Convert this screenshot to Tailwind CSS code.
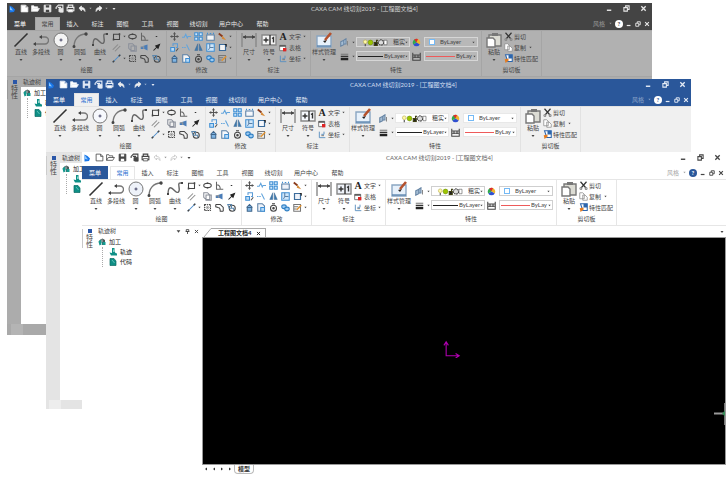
<!DOCTYPE html>
<html lang="zh-CN">
<head>
    <meta charset="UTF-8">
    <meta name="viewport" content="width=device-width, initial-scale=1.0">
    <title>CAXA CAM 线切割2019</title>
    <script src="https://cdn.jsdelivr.net/npm/@tailwindcss/browser@4"></script>
</head>
<body class="bg-white fill-none stroke-current [stroke-width:1.4] font-['Lato','Noto_Sans_CJK_SC',sans-serif] text-[6px] leading-[8px] text-[#444]">

    <!-- Icon sprite -->
    <svg class="hidden">
        <symbol id="caret" viewBox="0 0 8 8"><path d="M1 2h6L4 6z" fill="currentColor" stroke="none"/></symbol>
        <symbol id="logo" viewBox="0 0 16 16"><path d="M3 1l6 3 5 5-2 5-9 1z" fill="#1976e8" stroke="none"/><path d="M4 3l6 8-6-1z" fill="#8cc8ff" stroke="none"/></symbol>
        <symbol id="new" viewBox="0 0 16 16"><path d="M2 2h8l4 4v8H2zM10 2v4h4" fill="var(--fill)"/></symbol>
        <symbol id="open" viewBox="0 0 16 16"><path d="M1 13V3h4l1 2h6v3M1 13l3-5h11l-3 5z" fill="var(--fill)"/></symbol>
        <symbol id="save" viewBox="0 0 16 16"><path d="M2 2h12v12H2z" fill="currentColor"/><path d="M5 2h6v4H5zM5 10h6v4H5z" fill="var(--bar)" stroke="none"/></symbol>
        <symbol id="saveas" viewBox="0 0 16 16"><path d="M2 9V6l4-4h8v12H9M5 6h6" stroke-width="2"/><path d="M7 8h7v6H7z" fill="currentColor"/></symbol>
        <symbol id="print" viewBox="0 0 16 16"><path d="M4 6V2h8v4M4 12H2V6h12v6h-2" stroke-width="2"/><path d="M4 10h8v4H4z" fill="var(--fill)"/></symbol>
        <symbol id="undo" viewBox="0 0 16 16"><path d="M2 6l5-4v3c5 0 7 2 7 8-2-3-3-4-7-4v3z" fill="var(--arrow)" stroke="var(--arrowline)"/></symbol>
        <symbol id="redo" viewBox="0 0 16 16"><path d="M14 6L9 2v3c-5 0-7 2-7 8 2-3 3-4 7-4v3z" fill="var(--arrow)" stroke="var(--arrowline)"/></symbol>
        <symbol id="min" viewBox="0 0 8 8"><path d="M1 6h5" stroke-width="1.6"/></symbol>
        <symbol id="restore" viewBox="0 0 8 8"><path d="M3 3V1h4v4H5M1 3h4v4H1z" stroke-width="1.2"/></symbol>
        <symbol id="close" viewBox="0 0 8 8"><path d="M1.500 1.500l5 5m0-5l-5 5" stroke-width="1.500"/></symbol>

        <symbol id="line" viewBox="0 0 16 16"><path d="M1.500 14.500l13-13" stroke="#333" stroke-width="1.600"/></symbol>
        <symbol id="polyline" viewBox="0 0 16 16"><path d="M1 12h11a3.500 3.500 0 000-7H7" stroke="#777"/><path d="M0 12l3-2v4zM9 3v4L6 5z" fill="#444" stroke="none"/></symbol>
        <symbol id="circle" viewBox="0 0 16 16"><circle cx="8" cy="8" r="7" stroke="#777" stroke-width="1" fill="var(--disc)"/><path d="M8 6.500v3M6.500 8h3" stroke="#446" stroke-width="1"/></symbol>
        <symbol id="arc" viewBox="0 0 16 16"><path d="M2 15C2 8 6 2 14 2" stroke="#777"/><circle cx="14" cy="2" r="1" fill="#444"/><circle cx="2" cy="14.500" r=".8" fill="#444"/></symbol>
        <symbol id="spline" viewBox="0 0 16 16"><path d="M1 14C1 3 5 7 8 10s5 1 4-4 1-4 3-4" stroke="#666"/><path d="M0 13h2M14 2h2" stroke-width="2" stroke="#444"/></symbol>

        <symbol id="rect" viewBox="0 0 12 12"><path d="M2 10V3h8v7z"/><path d="M1 10h2M9 3h2" stroke-width="2.400"/></symbol>
        <symbol id="parallel" viewBox="0 0 12 12"><path d="M1 9l7-7M4 11l7-7" stroke="#888"/></symbol>
        <symbol id="centerline" viewBox="0 0 12 12"><path d="M1 11L11 1" stroke="#4a8ccb"/><path d="M1 11l2-2M9 3l2-2" stroke-width="2"/></symbol>
        <symbol id="ellipse" viewBox="0 0 12 12"><ellipse cx="6" cy="6" rx="5" ry="3"/><path d="M5 3h2M5 9h2" stroke-width="2"/></symbol>
        <symbol id="pages" viewBox="0 0 12 12"><path d="M1 1h5l3 3v6H4L1 7zM4 4h7v7H4z" stroke="#8a8f9a"/></symbol>
        <symbol id="hatch" viewBox="0 0 12 12"><path d="M2 2h8v8H2z" stroke-dasharray="2 1"/><path d="M2 2l8 8M2 10l8-8M2 6h8M6 2v8" stroke="#888" stroke-width=".7"/></symbol>
        <symbol id="axes" viewBox="0 0 12 12"><path d="M2 1v10h9M2 5c4 0 5 3 5 6" stroke="#666"/></symbol>
        <symbol id="screen" viewBox="0 0 12 12"><path d="M1 5l9-3v8L6 8H1z" fill="#4a7db8" stroke="none"/><path d="M1 5h4v3" stroke="#999"/></symbol>
        <symbol id="block" viewBox="0 0 12 12"><path d="M1 2h6l4 4v5M1 2v3l3 1c2 0 3 2 3 5h4"/></symbol>
        <symbol id="dot" viewBox="0 0 12 12"><path d="M5 6h2" stroke="#333"/></symbol>
        <symbol id="arrow" viewBox="0 0 12 12"><path d="M2 10l5-5" stroke="#222"/><path d="M10 2L5 4l3 3z" fill="#222" stroke="#222"/></symbol>
        <symbol id="gear" viewBox="0 0 12 12"><circle cx="7" cy="7" r="4"/><path d="M1 2h5v5H3zM5 7h4v3" stroke="#5a86ad"/></symbol>

        <symbol id="move" viewBox="0 0 12 12"><path d="M6 1v10M1 6h10" stroke="#555"/><path d="M4 3l2-3 2 3zM4 9l2 3 2-3zM3 4L0 6l3 2zM9 4l3 2-3 2z" fill="#555" stroke="none"/></symbol>
        <symbol id="trim" viewBox="0 0 12 12"><path d="M0 7h3l2-4 2 5 1-2h4" stroke="#62a4dc"/></symbol>
        <symbol id="array" viewBox="0 0 12 12"><path d="M1 1h4v4H1zM7 1h4v4H7zM1 7h4v4H1zM7 7h4v4H7z" stroke="#3f8fd4" fill="#cfe6fa"/></symbol>
        <symbol id="stretch" viewBox="0 0 12 12"><path d="M1 4h10v7H1z" stroke="#5a7fa5" fill="var(--disc)"/><path d="M2 1v2M5 2h2M10 1v2" stroke="#3f8fd4"/></symbol>
        <symbol id="erase" viewBox="0 0 12 12"><path d="M1 2l5 4" stroke="#8a3b1c" stroke-width="2.500"/><path d="M6 5l5 6-6-2z" fill="#d68a38" stroke="none"/></symbol>
        <symbol id="copy" viewBox="0 0 12 12"><path d="M1 6h5v5H1z" fill="#bcdcf7" stroke="#3f8fd4"/><path d="M4 4V1h6v5H8" stroke="#5a9bd6"/><path d="M8 11l3-4" stroke="#555"/></symbol>
        <symbol id="extend" viewBox="0 0 12 12"><path d="M0 6h6" stroke="#62a4dc" stroke-dasharray="2 1"/><path d="M6 2l4 8" stroke="#62a4dc"/></symbol>
        <symbol id="mirror" viewBox="0 0 12 12"><path d="M5 1v9H1zM7 1v9h4z" fill="#3c78ad" stroke="#3c6890" stroke-width=".6"/></symbol>
        <symbol id="scale" viewBox="0 0 12 12"><path d="M1 1h10v10H1z" fill="#cfe6fa" stroke="#3f8fd4"/><path d="M5 1v5h5M3 9l2-2" stroke="#5a7fa5"/></symbol>
        <symbol id="frame" viewBox="0 0 12 12"><path d="M2 2h8v8H2z" stroke="#3b6c9c" stroke-width="1.600" fill="var(--disc)"/><path d="M9 2h2v3" stroke="#222"/></symbol>
        <symbol id="lift" viewBox="0 0 12 12"><path d="M2 6l4-4 4 4M3 6v5h6V6z" fill="#7fb5e4" stroke="#41678c"/></symbol>
        <symbol id="find" viewBox="0 0 12 12"><path d="M1 1h6l3 3v7H1z" stroke="#5a7fa5" fill="var(--disc)"/><path d="M5 6h5v5H5z" stroke="#3f8fd4" fill="#bcdcf7"/></symbol>
        <symbol id="rotate" viewBox="0 0 12 12"><circle cx="6" cy="7" r="4"/><circle cx="6" cy="7" r="1" fill="currentColor"/><path d="M4 1h4"/></symbol>
        <symbol id="chain" viewBox="0 0 12 12"><ellipse cx="4" cy="5" rx="3" ry="2.500" stroke="#2f7fc4" fill="#9bcbf3"/><ellipse cx="8" cy="8" rx="3" ry="2.500" stroke="#2f7fc4" fill="#9bcbf3"/></symbol>
        <symbol id="edit" viewBox="0 0 12 12"><path d="M1 2h9v9H1zM1 5h6M1 8h4" stroke="#777"/><path d="M5 9l6-6" stroke="#e0912e" stroke-width="2"/></symbol>

        <symbol id="dim" viewBox="0 0 16 16"><path d="M1 1v14M15 1v14" stroke="#888"/><path d="M2 5h12" stroke="#444"/><path d="M2 5l3-2v4zM14 5l-3-2v4z" fill="#444" stroke="none"/></symbol>
        <symbol id="sign" viewBox="0 0 16 16"><path d="M1 3h14v10H1z" fill="var(--disc)" stroke="#888"/><path d="M2.500 8h5M5 5.500v5M9 3v10M11 6.500l1.500-1v5" stroke="#333"/></symbol>
        <symbol id="table" viewBox="0 0 12 12"><path d="M1 2h9v8H1z" fill="#fff" stroke="#777"/><path d="M1 3h9" stroke="#444" stroke-width="2"/><path d="M6 6h5v5H6z" fill="#e02424" stroke="none"/></symbol>
        <symbol id="coord" viewBox="0 0 12 12"><path d="M2 1v9h9M5 5h4V1" stroke="#5a8fc0"/><path d="M5 7h4" stroke="#777"/></symbol>
        <symbol id="style" viewBox="0 0 16 16"><path d="M1 4h14v11H1z" fill="#e7f1fb" stroke="#8aa6c2"/><path d="M1 14h14" stroke="#5e87b0"/><path d="M7 9l2 2 2-3z" fill="#222" stroke="none"/><path d="M9 8l6-7" stroke="#b4512d" stroke-width="2.600"/></symbol>
        <symbol id="layers" viewBox="0 0 12 12"><path d="M1 5l4-2v6l-4 2zM5 3l3-2v7H5z" fill="#a5bdd4" stroke="#6886a5"/><path d="M10 4v6" stroke="#888"/></symbol>
        <symbol id="weights" viewBox="0 0 12 12"><path d="M1 3h10" stroke="#777"/><path d="M1 6h10" stroke="#333" stroke-width="2"/><path d="M1 9.500h10" stroke="#222" stroke-width="3"/></symbol>
        <symbol id="states" viewBox="0 0 34 12"><circle cx="4" cy="5" r="2.500" fill="#fff9a8" stroke="#b8ab4a" stroke-width=".8"/><path d="M4 8v3"/><circle cx="11" cy="6" r="3.200" fill="#9cc400" stroke="#6d8f00" stroke-width=".8"/><path d="M16 6h4v4h-4zM19 6V3h2" fill="#222" stroke="#3d3d10"/><circle cx="25" cy="6" r="3.500" stroke="#333" stroke-dasharray="2 1" fill="#ddd"/><path d="M29 3h4v6h-4z" fill="#fff" stroke="#555" stroke-width=".8"/></symbol>
        <symbol id="wheel" viewBox="0 0 12 12"><g stroke="none"><path d="M6 6V1a5 5 0 014.300 7.500z" fill="#f0b429"/><path d="M6 6l4.300 2.500a5 5 0 01-8.600 0z" fill="#2f4fd0"/><path d="M6 6L1.700 8.500A5 5 0 016 1z" fill="#2fa84f"/><path d="M6 6L3 2a5 5 0 015-.6z" fill="#e02c2c"/></g></symbol>
        <symbol id="ltype" viewBox="0 0 12 12"><path d="M1 1v10h10V1M1 4h10M1 7h10M4 4v4M8 4v4" stroke="#444"/></symbol>
        <symbol id="paste" viewBox="0 0 16 16"><path d="M3 3h12v11H3z" fill="#dcdcd4" stroke="#777"/><path d="M6 1h6v3H6z" fill="#777" stroke="none"/><path d="M1 6h6l2 2v7H1z" fill="#fff" stroke="#777"/></symbol>
        <symbol id="cut" viewBox="0 0 12 12"><path d="M2 1l7 8M10 1L3 9" stroke="#333" stroke-width="1.600"/><circle cx="2.500" cy="10" r="1.300" stroke="#888"/><circle cx="9.500" cy="10" r="1.300" stroke="#888"/></symbol>
        <symbol id="dup" viewBox="0 0 12 12"><path d="M1 1h4l2 2v6H1zM5 4h3l3 3v4H5z" fill="#fff" stroke="#8a8a8a" stroke-width="1"/></symbol>
        <symbol id="match" viewBox="0 0 12 12"><path d="M2 1h9v9H5z" fill="#fff" stroke="#2c66ad"/><path d="M6 1h5v5H6z" fill="#2c66ad" stroke="none"/><path d="M1 7l5-1v3l-4 3z" fill="#e37b1f" stroke="none"/></symbol>

        <symbol id="cube" viewBox="0 0 16 16"><path d="M5 3a7 6 0 109 9V4L9 1z" fill="#4a5a5a" stroke="none"/><path d="M1 7l5-4 2 9-5 3zM9 8h6v6H9z" fill="#159a8f" stroke="none"/><path d="M8 3v5M7 9v5" stroke="#e5f5f3"/></symbol>
        <symbol id="path" viewBox="0 0 16 16"><path d="M6 0h5v7l2 3 3 1v4H4L1 9l5 1z" fill="#0f8f86" stroke="none"/><path d="M9 3v5" stroke="#bff0ea"/></symbol>
        <symbol id="code" viewBox="0 0 16 16"><path d="M2 1h8l4 5v9H2z" fill="#0f8f86" stroke="#0a6a63"/><path d="M6 4l5 6" stroke="#7fd6cf"/></symbol>
    </svg>

    <!-- Title bar, tabs and ribbon: the same in every skin -->
    <template id="chrome">
        <header class="bg-(--bar) text-(--barink)">
            <div class="flex h-[10px] items-center mb-[4px] pt-[1px]">
                <div class="flex w-[304px] items-center pl-[1px]">
                    <svg class="size-[8px] mr-[2px]"><use href="#logo"/></svg>
                    <button aria-label="新建" class="w-[12px]"><svg class="mx-auto size-[9px]"><use href="#new"/></svg></button>
                    <button aria-label="打开" class="w-[11px]"><svg class="mx-auto size-[9px]"><use href="#open"/></svg></button>
                    <button aria-label="保存" class="w-[12px]"><svg class="mx-auto size-[9px]"><use href="#save"/></svg></button>
                    <button aria-label="另存为" class="w-[12px]"><svg class="mx-auto size-[9px]"><use href="#saveas"/></svg></button>
                    <button aria-label="打印" class="w-[11px]"><svg class="mx-auto size-[9px]"><use href="#print"/></svg></button>
                    <button aria-label="撤销" class="w-[12px]"><svg class="mx-auto size-[8px]"><use href="#undo"/></svg></button>
                    <svg class="size-[3px] mx-[1px] opacity-60"><use href="#caret"/></svg>
                    <button aria-label="重做" class="w-[11px]"><svg class="mx-auto size-[8px]"><use href="#redo"/></svg></button>
                    <svg class="size-[3px] mx-[1px] opacity-60"><use href="#caret"/></svg>
                    <svg class="size-[4px] ml-[3px]"><use href="#caret"/></svg>
                </div>
                <h1 class="flex-1 whitespace-nowrap text-(--title)">CAXA CAM 线切割2019 - [工程图文档4]</h1>
                <div class="flex gap-[10px] pr-[5px]">
                    <button aria-label="最小化"><svg class="size-[7px]"><use href="#min"/></svg></button>
                    <button aria-label="还原"><svg class="size-[7px]"><use href="#restore"/></svg></button>
                    <button aria-label="关闭"><svg class="size-[7px]"><use href="#close"/></svg></button>
                </div>
            </div>
            <nav class="flex h-[13px] items-stretch">
                <button class="w-[26px] mr-[2px] bg-(--menu) text-white">菜单</button>
                <button class="w-[25px] bg-(--ribbon) text-(--active) border border-b-0 border-(--edge)">常用</button>
                <button class="w-[25px]">插入</button>
                <button class="w-[25px]">标注</button>
                <button class="w-[25px]">图幅</button>
                <button class="w-[25px]">工具</button>
                <button class="w-[25px]">视图</button>
                <button class="w-[27px]">线切割</button>
                <button class="w-[38px]">用户中心</button>
                <button class="w-[25px]">帮助</button>
                <div class="ml-auto flex items-center gap-[3px] pr-[2px]">
                    <button class="flex items-center gap-[4px] opacity-50">风格 <svg class="size-[3px]"><use href="#caret"/></svg></button>
                    <button aria-label="帮助" class="size-[8px] rounded-full bg-(--help) text-(--helpink) font-bold">?</button>
                    <button aria-label="最小化文档"><svg class="size-[6px]"><use href="#min"/></svg></button>
                    <button aria-label="还原文档"><svg class="size-[6px]"><use href="#restore"/></svg></button>
                    <button aria-label="关闭文档"><svg class="size-[6px]"><use href="#close"/></svg></button>
                </div>
            </nav>
        </header>
        <div class="flex h-[47px] bg-(--ribbon) border-y border-(--edge) whitespace-nowrap [&>section]:flex [&>section]:flex-col [&>section]:border-r [&>section]:border-(--edge) [&_h2]:text-center [&_h2]:leading-[12px]">
            <section class="w-[160px]">
                <div class="flex h-[33px] pl-[4px]">
                    <button class="flex w-[20px] flex-col items-center pt-[1px]"><svg class="size-[16px]"><use href="#line"/></svg>直线<svg class="size-[4px] mt-[2px]"><use href="#caret"/></svg></button>
                    <button class="flex w-[20px] flex-col items-center pt-[1px]"><svg class="size-[16px]"><use href="#polyline"/></svg>多段线</button>
                    <button class="flex w-[19px] flex-col items-center pt-[1px]"><svg class="size-[16px]"><use href="#circle"/></svg>圆<svg class="size-[4px] mt-[2px]"><use href="#caret"/></svg></button>
                    <button class="flex w-[20px] flex-col items-center pt-[1px]"><svg class="size-[16px]"><use href="#arc"/></svg>圆弧<svg class="size-[4px] mt-[2px]"><use href="#caret"/></svg></button>
                    <button class="flex w-[20px] flex-col items-center pt-[1px]"><svg class="size-[16px]"><use href="#spline"/></svg>曲线<svg class="size-[4px] mt-[2px]"><use href="#caret"/></svg></button>
                    <div class="grid grid-cols-[12px_4px_12px_12px_12px] grid-rows-3 place-items-center">
                        <svg class="size-[9px]"><use href="#rect"/></svg><svg class="size-[3px]"><use href="#caret"/></svg><svg class="size-[9px]"><use href="#ellipse"/></svg><svg class="size-[9px]"><use href="#axes"/></svg><svg class="size-[9px]"><use href="#dot"/></svg>
                        <svg class="size-[9px]"><use href="#parallel"/></svg><span></span><svg class="size-[9px]"><use href="#pages"/></svg><svg class="size-[9px]"><use href="#screen"/></svg><svg class="size-[9px]"><use href="#arrow"/></svg>
                        <svg class="size-[9px]"><use href="#centerline"/></svg><svg class="size-[3px]"><use href="#caret"/></svg><svg class="size-[9px]"><use href="#hatch"/></svg><svg class="size-[9px]"><use href="#block"/></svg><svg class="size-[9px]"><use href="#gear"/></svg>
                    </div>
                </div>
                <h2>绘图</h2>
            </section>
            <section class="w-[70px]">
                <div class="grid h-[33px] grid-cols-[12px_12px_12px_12px_12px_4px] grid-rows-3 place-items-center pl-[1px]">
                    <svg class="size-[9px]"><use href="#move"/></svg><svg class="size-[9px]"><use href="#trim"/></svg><svg class="size-[9px]"><use href="#array"/></svg><svg class="size-[9px]"><use href="#stretch"/></svg><svg class="size-[9px]"><use href="#erase"/></svg><svg class="size-[3px]"><use href="#caret"/></svg>
                    <svg class="size-[9px]"><use href="#copy"/></svg><svg class="size-[9px]"><use href="#extend"/></svg><svg class="size-[9px]"><use href="#mirror"/></svg><svg class="size-[9px]"><use href="#scale"/></svg><svg class="size-[9px]"><use href="#frame"/></svg><svg class="size-[3px]"><use href="#caret"/></svg>
                    <svg class="size-[9px]"><use href="#lift"/></svg><svg class="size-[9px]"><use href="#find"/></svg><svg class="size-[9px]"><use href="#rotate"/></svg><svg class="size-[9px]"><use href="#chain"/></svg><svg class="size-[9px]"><use href="#edit"/></svg><svg class="size-[3px]"><use href="#caret"/></svg>
                </div>
                <h2>修改</h2>
            </section>
            <section class="w-[74px]">
                <div class="flex h-[33px] pl-[2px]">
                    <button class="flex w-[20px] flex-col items-center pt-[1px]"><svg class="size-[16px]"><use href="#dim"/></svg>尺寸<svg class="size-[4px] mt-[2px]"><use href="#caret"/></svg></button>
                    <button class="flex w-[20px] flex-col items-center pt-[1px]"><svg class="size-[16px]"><use href="#sign"/></svg>符号<svg class="size-[4px] mt-[2px]"><use href="#caret"/></svg></button>
                    <div class="grid grid-rows-3">
                        <button class="flex items-center gap-[2px]"><span class="w-[8px] text-center font-['Liberation_Serif',serif] text-[10px] font-bold text-[#222]">A</span>文字<svg class="size-[3px]"><use href="#caret"/></svg></button>
                        <button class="flex items-center gap-[2px]"><svg class="size-[8px]"><use href="#table"/></svg>表格</button>
                        <button class="flex items-center gap-[2px]"><svg class="size-[8px]"><use href="#coord"/></svg>坐标<svg class="size-[3px]"><use href="#caret"/></svg></button>
                    </div>
                </div>
                <h2>标注</h2>
            </section>
            <section class="w-[171px]">
                <div class="flex h-[33px]">
                    <button class="flex w-[26px] flex-col items-center pt-[1px]"><svg class="size-[16px]"><use href="#style"/></svg>样式管理<svg class="size-[4px] mt-[2px]"><use href="#caret"/></svg></button>
                    <div class="grid flex-1 grid-cols-[12px_6px_56px_12px_56px] content-center items-center gap-y-[4px] pl-[1px] pt-[3px] [&_select]:w-full [&_select]:appearance-none [&_select]:outline-none">
                        <svg class="mx-auto size-[9px]"><use href="#layers"/></svg><svg class="mx-auto size-[3px]"><use href="#caret"/></svg>
                        <div class="flex h-[10px] w-[54px] items-center border border-(--box) bg-(--field) px-[1px]"><svg class="h-[9px] w-[34px] shrink-0"><use href="#states"/></svg><select aria-label="图层" class="pl-[1px]"><option>粗实</option></select><svg class="size-[3px] shrink-0"><use href="#caret"/></svg></div>
                        <svg class="size-[9px]"><use href="#wheel"/></svg>
                        <div class="flex h-[10px] w-[54px] items-center border border-(--box) bg-(--field) pl-[4px] pr-[2px]"><span class="size-[6px] shrink-0 border border-[#74b9f5] bg-white"></span><select aria-label="颜色" class="pl-[5px]"><option>ByLayer</option></select><svg class="size-[3px] shrink-0"><use href="#caret"/></svg></div>
                        <svg class="mx-auto size-[9px]"><use href="#weights"/></svg><svg class="mx-auto size-[3px]"><use href="#caret"/></svg>
                        <div class="flex h-[10px] w-[54px] items-center border border-(--box) bg-(--field) px-[1px]"><span class="h-px w-[25px] shrink-0 bg-[#222]"></span><select aria-label="线宽" class="pl-[1px]"><option>ByLayer</option></select><svg class="size-[3px] shrink-0"><use href="#caret"/></svg></div>
                        <svg class="size-[9px]"><use href="#ltype"/></svg>
                        <div class="flex h-[10px] w-[54px] items-center border border-(--box) bg-(--field) px-[1px]"><span class="h-px w-[29px] shrink-0 bg-[#ee5a5a]"></span><select aria-label="线型" class="min-w-0 pl-[1px]"><option>ByLay</option></select><svg class="size-[3px] shrink-0"><use href="#caret"/></svg></div>
                    </div>
                </div>
                <h2>特性</h2>
            </section>
            <section class="w-[60px]">
                <div class="flex h-[33px] pl-[2px]">
                    <button class="flex w-[20px] flex-col items-center pt-[1px]"><svg class="size-[16px]"><use href="#paste"/></svg>粘贴<svg class="size-[4px] mt-[2px]"><use href="#caret"/></svg></button>
                    <div class="grid grid-rows-3">
                        <button class="flex items-center gap-[1px]"><svg class="size-[9px]"><use href="#cut"/></svg>剪切</button>
                        <button class="flex items-center gap-[1px]"><svg class="size-[9px]"><use href="#dup"/></svg>复制<svg class="size-[3px] ml-[2px]"><use href="#caret"/></svg></button>
                        <button class="flex items-center gap-[1px]"><svg class="size-[9px]"><use href="#match"/></svg>特性匹配</button>
                    </div>
                </div>
                <h2>剪切板</h2>
            </section>
        </div>
    </template>

    <!-- Docked strip and tool path tree -->
    <template id="dock">
        <aside class="w-[14px] bg-(--dock) pt-[3px]">
            <div class="flex flex-col items-center border-l border-(--dockline)">
                <span class="size-[4px] bg-[#2b57a8]"></span>
                <button class="mt-[1px] text-[7px] [writing-mode:vertical-rl]">特性</button>
            </div>
        </aside>
        <section class="w-[106px] bg-white">
            <div class="flex h-[10px] items-center bg-(--dock) pl-[2px]">
                <h2 class="flex-1">轨迹树</h2>
                <div class="flex gap-[4px] pr-[3px]">
                    <svg class="size-[5px]"><use href="#caret"/></svg>
                    <svg class="size-[5px]" viewBox="0 0 8 8"><path d="M2 1h4v3H2zM1 4h6M4 4v4"/></svg>
                    <svg class="size-[5px]"><use href="#close"/></svg>
                </div>
            </div>
            <ul class="pl-[2px] pt-[1px] text-[#222] leading-[10px]">
                <li>
                    <span class="flex items-center gap-[3px]"><svg class="size-[8px]"><use href="#cube"/></svg>加工</span>
                    <ul class="ml-[4px] border-l border-dotted border-[#aaa]">
                        <li class="flex items-center gap-[3px] pl-[6px]"><svg class="size-[8px]"><use href="#path"/></svg>轨迹</li>
                        <li class="flex items-center gap-[3px] pl-[6px]"><svg class="size-[8px]"><use href="#code"/></svg>代码</li>
                    </ul>
                </li>
            </ul>
        </section>
    </template>

    <main class="relative min-h-screen overflow-hidden">
        <!-- Dark skin -->
        <article class="absolute top-[3px] right-[74px] bottom-[142px] left-[7px] flex flex-col overflow-hidden bg-white [--bar:#444444] [--barink:#e8e8e8] [--title:#d0d0d0] [--menu:#444444] [--ribbon:#b1b1b1] [--active:#444444] [--edge:#a5a5a5] [--disc:#f4f4f4] [--fill:#ffffff] [--arrow:#f0f0f0] [--arrowline:#f0f0f0] [--field:#b8b8b8] [--box:#d6d6d6] [--help:#ffffff] [--helpink:#444444] [--dock:#acacac] [--dockline:#999999]">
            <div data-part="chrome" class="contents"></div>
            <div data-part="dock" class="flex flex-1 bg-[#acacac]"></div>
            <footer class="flex h-[11px] bg-[#a9a9a9] pl-[4px]"><span class="w-[12px] bg-[#b4b4b4]"></span></footer>
        </article>

        <!-- Blue skin -->
        <article class="absolute top-[79px] right-[35px] bottom-[68px] left-[46px] flex flex-col overflow-hidden bg-white [--bar:#2a579a] [--barink:#e6edf7] [--title:#d3dff0] [--menu:#2a579a] [--ribbon:#f0f0f0] [--active:#2a6fd0] [--edge:#e2e2e2] [--disc:#f6f8fc] [--fill:#ffffff] [--arrow:#f0f0f0] [--arrowline:#f0f0f0] [--field:#ffffff] [--box:#e8e8e8] [--help:#ffffff] [--helpink:#2a579a] [--dock:#e4e4e4] [--dockline:#cccccc]">
            <div data-part="chrome" class="contents"></div>
            <div data-part="dock" class="flex flex-1"></div>
            <footer class="flex h-[9px] bg-[#e4e4e4] pl-[3px]"><span class="w-[12px] bg-[#ededed]"></span></footer>
        </article>

        <!-- Light skin -->
        <article class="absolute top-[152px] right-0 bottom-0 left-[82px] flex flex-col overflow-hidden bg-white [--bar:#ffffff] [--barink:#444444] [--title:#666666] [--menu:#2a579a] [--ribbon:#ffffff] [--active:#2a6fd0] [--edge:#e6e6e6] [--disc:#eef2f9] [--fill:#ffffff] [--arrow:#ffffff] [--arrowline:#bbbbbb] [--field:#ffffff] [--box:#cfcfcf] [--help:#2a579a] [--helpink:#ffffff] [--dock:#ffffff] [--dockline:#c8c8c8]">
            <div data-part="chrome" class="contents"></div>
            <div class="flex flex-1">
                <div data-part="dock" class="flex"></div>
                <section class="flex flex-1 flex-col">
                    <div class="flex h-[11px] items-end justify-between pr-[2px]">
                        <div class="flex h-[9px] items-center">
                            <svg class="h-[9px] w-[12px]" viewBox="0 0 12 9"><path d="M2 9L9 .5h3" stroke="#aaa" stroke-width="1"/></svg>
                            <button class="flex h-[9px] items-center gap-[5px] border-t border-r border-[#aaa] px-[4px] font-bold text-[#222]">工程图文档4 <svg class="size-[5px]"><use href="#close"/></svg></button>
                        </div>
                        <svg class="mb-[3px] size-[4px]"><use href="#caret"/></svg>
                    </div>
                    <div class="relative flex-1 border border-[#999] bg-black">
                        <!-- Coordinate origin -->
                        <svg class="absolute top-[45%] left-[46%] size-[18px]" viewBox="0 0 20 20" stroke="#b000b0" stroke-width="1.2"><path d="M3.500 2v15.500H18M1 6l2.500-4L6 6M14 15l4 2.500-4 2.500"/></svg>
                        <!-- Crosshair at the right edge -->
                        <svg class="absolute top-[73%] right-0 h-[22px] w-[11px]" viewBox="0 0 11 22"><path d="M0 10.500h9" stroke="#999" stroke-width="2"/><path d="M10.500 0v22" stroke="#777" stroke-width="1"/><path d="M8 10.500l3-3v6z" fill="#3c8f5c" stroke="none"/></svg>
                    </div>
                    <footer class="flex h-[12px] items-start pl-[2px] text-[#333]">
                        <div class="flex gap-[4px] pt-[2px]">
                            <svg class="size-[4px] rotate-90"><use href="#caret"/></svg>
                            <svg class="size-[4px] rotate-90"><use href="#caret"/></svg>
                            <svg class="size-[4px] -rotate-90"><use href="#caret"/></svg>
                            <svg class="size-[4px] -rotate-90"><use href="#caret"/></svg>
                        </div>
                        <button class="ml-[2px] rounded-b border-x border-b border-[#bbb] px-[3px] font-bold">模型</button>
                    </footer>
                </section>
            </div>
        </article>
    </main>

    <script>
        document.querySelectorAll('[data-part]').forEach(function (slot) {
            var tpl = document.getElementById(slot.dataset.part);
            slot.appendChild(tpl.content.cloneNode(true));
        });
    </script>
</body>
</html>
